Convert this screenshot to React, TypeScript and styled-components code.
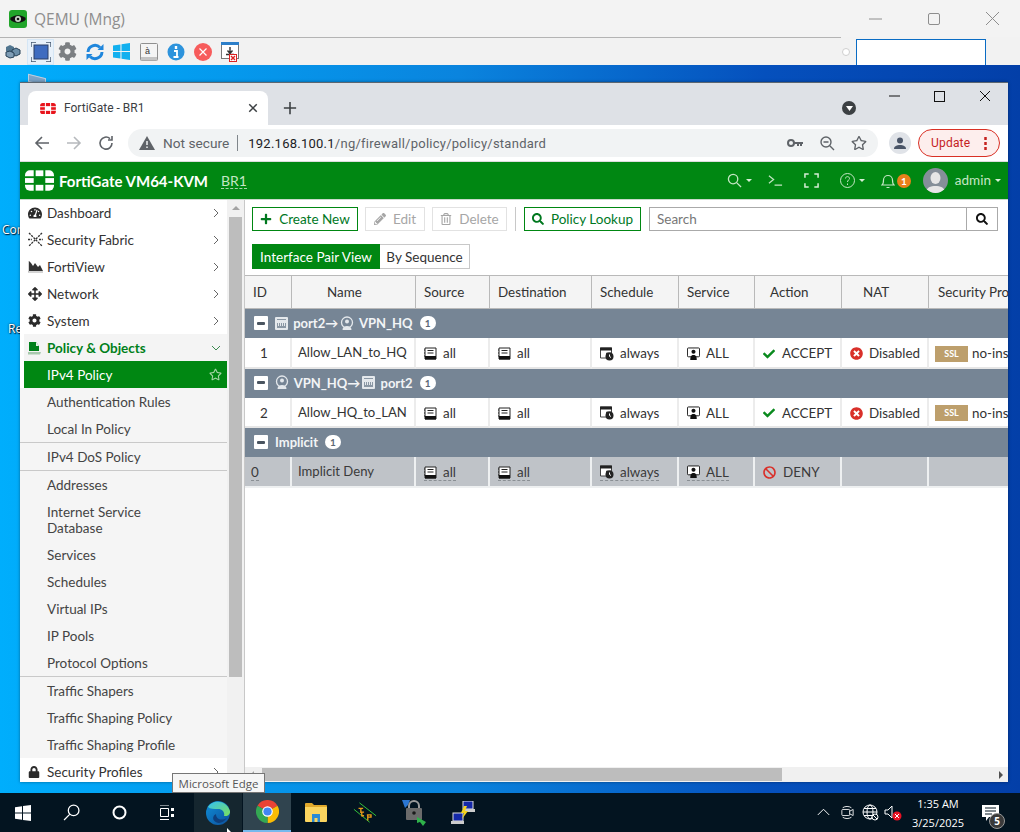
import React from "react"
import styled, {createGlobalStyle} from "styled-components"
import {
  FaArrowsAlt,
  FaBan,
  FaCheck,
  FaCog,
  FaLock,
  FaPencilAlt,
  FaPlus,
  FaRegStar,
  FaRegTrashAlt,
  FaSearch,
  FaTachometerAlt,
  FaTimesCircle
} from "react-icons/fa"

const GlobalStyle = createGlobalStyle`
  html, body {
    margin: 0;
    padding: 0;
    width: 1020px;
    height: 832px;
    overflow: hidden;
    font-family: "Lato", "Liberation Sans", sans-serif;
  }
  * {
    box-sizing: border-box;
  }
`

const Screen = styled.div`
  width: 1020px;
  height: 832px;
  display: flex;
  flex-direction: column;
`

/* ---- QEMU console window ---- */

const QemuTitle = styled.div`
  height: 37px;
  flex: none;
  background: #f3f3f3;
  display: flex;
  align-items: center;
  padding-left: 9px;
  gap: 7px;
  color: #8e8e8e;
  font: 15.5px "Open Sans", sans-serif;
`

const QemuControls = styled.div`
  margin-left: auto;
  display: flex;
  align-items: center;
  margin-right: 21px;
  gap: 46px;
`

const QemuBar = styled.div`
  height: 28px;
  flex: none;
  background: #f2f2f2;
  border-top: 1px solid #f2f2f2;
  display: flex;
  align-items: center;
  position: relative;
`

const QemuRule = styled.div`
  position: absolute;
  left: 0;
  top: -1px;
  width: 841px;
  height: 1px;
  background: #b4b4b4;
`

const QemuTool = styled.div<{$hover?: boolean}>`
  width: 27px;
  height: 26px;
  display: flex;
  align-items: center;
  justify-content: center;
  border: 1px solid ${(p) => (p.$hover ? "#d5e6f5" : "transparent")};
  background: ${(p) => (p.$hover ? "#e8f1fa" : "transparent")};
`

const QemuDot = styled.div`
  margin-left: auto;
  width: 8px;
  height: 8px;
  border-radius: 50%;
  background: #fff;
  border: 1px solid #cfcfcf;
`

const QemuInput = styled.div`
  width: 130px;
  height: 26px;
  margin: 1px 34px 0 6px;
  background: #fff;
  border: 1px solid #0a6cc4;
  border-bottom: 0;
`

const Desktop = styled.div`
  flex: 1;
  position: relative;
  overflow: hidden;
  background: linear-gradient(90deg, #00aefc 0%, #0a84de 45%, #0550bd 75%, #033fa8 100%);
`

const DesktopLabel = styled.span<{$top: number; $left: number}>`
  position: absolute;
  top: ${(p) => p.$top}px;
  left: ${(p) => p.$left}px;
  color: #fff;
  font: 12px "Open Sans", sans-serif;
  text-shadow: 0 0 2px #001a33, 1px 1px 1px #001a33;
`

const DesktopIcon = styled.div`
  position: absolute;
  left: 28px;
  top: 11px;
  width: 18px;
  height: 8px;
  background: #7da3c7;
  border: 1px solid #bcd0e2;
  transform: skewY(14deg);
`

/* ---- browser window ---- */

const BrowserWindow = styled.div`
  position: absolute;
  left: 20px;
  top: 17px;
  width: 988px;
  height: 700px;
  border-top: 1px solid #5c6670;
  display: flex;
  flex-direction: column;
  background: #fff;
  box-shadow: 0 0 3px rgba(0, 0, 0, 0.4);
`

const TabStrip = styled.div`
  height: 42px;
  flex: none;
  background: #dee1e6;
  display: flex;
  align-items: flex-end;
  padding-left: 8px;
  position: relative;
`

const Tab = styled.div`
  width: 240px;
  height: 34px;
  background: #fff;
  border-radius: 8px 8px 0 0;
  display: flex;
  align-items: center;
  padding: 0 9px 0 12px;
  gap: 8px;
  font: 12px "Roboto", sans-serif;
  color: #3c4043;
`

const TabClose = styled.span`
  margin-left: auto;
  display: flex;
`

const NewTab = styled.div`
  margin: 0 0 10px 15px;
  display: flex;
`

const ProfileArrow = styled.div`
  position: absolute;
  left: 822px;
  top: 18px;
  width: 14px;
  height: 14px;
  border-radius: 50%;
  background: #3c4043;
  display: flex;
  align-items: center;
  justify-content: center;
`

const WindowControls = styled.div`
  position: absolute;
  right: 17px;
  top: 7px;
  display: flex;
  align-items: center;
  gap: 34px;
`

const NavBar = styled.div`
  height: 37px;
  flex: none;
  display: flex;
  align-items: center;
  padding: 0 8px 0 6px;
  border-bottom: 1px solid #dcdcdc;
`

const NavButton = styled.div`
  width: 32px;
  flex: none;
  display: flex;
  justify-content: center;
`

const Omnibox = styled.div`
  margin-left: 6px;
  width: 750px;
  flex: none;
  height: 28px;
  border-radius: 14px;
  background: #f1f3f4;
  display: flex;
  align-items: center;
  padding-left: 11px;
  font: 13px "Roboto", sans-serif;
  color: #5f6368;
`

const SecureLabel = styled.span`
  margin-left: 8px;
  font-size: 13.7px;
`

const UrlSep = styled.span`
  width: 1px;
  height: 16px;
  background: #80868b;
  margin: 0 10px 0 8px;
`

const UrlHost = styled.span`
  color: #202124;
  letter-spacing: 0.25px;
`

const UrlPath = styled.span`
  letter-spacing: 0.25px;
`

const OmniIcons = styled.div`
  margin-left: auto;
  display: flex;
  align-items: center;
  gap: 16px;
  margin-right: 11px;
`

const ProfileButton = styled.div`
  margin-left: 11px;
  width: 22px;
  height: 22px;
  flex: none;
  border-radius: 50%;
  background: #e0e3e8;
  display: flex;
  align-items: center;
  justify-content: center;
`

const UpdatePill = styled.div`
  margin-left: 7px;
  width: 82px;
  flex: none;
  height: 28px;
  border-radius: 14px;
  border: 1px solid #d93025;
  background: #fdeeed;
  color: #c5221f;
  display: flex;
  align-items: center;
  padding-left: 12px;
  font: 12px "Roboto", sans-serif;
  letter-spacing: 0.2px;
`

const PillDots = styled.span`
  margin-left: auto;
  margin-right: 12px;
  display: flex;
`

/* ---- FortiGate header ---- */

const GreenHeader = styled.div`
  height: 38px;
  flex: none;
  background: #008712;
  border-bottom: 1px solid #c9d9cb;
  display: flex;
  align-items: center;
  padding-left: 5px;
  color: #fff;
`

const Brand = styled.span`
  margin-left: 5px;
  font-size: 15px;
  font-weight: 700;
`

const Hostname = styled.span`
  margin-left: 13px;
  font-size: 14px;
  color: #c4e6c4;
  border-bottom: 1px dashed #a8d4a8;
  line-height: 15px;
`

const HeaderTools = styled.div`
  margin-left: auto;
  display: flex;
  align-items: center;
  margin-right: 7px;
  color: #c4e6c4;
`

const HeaderTool = styled.span<{$w: number}>`
  width: ${(p) => p.$w}px;
  display: flex;
  align-items: center;
  position: relative;
`

const Caret = styled.span`
  width: 0;
  height: 0;
  margin-left: 4px;
  border-left: 3.5px solid transparent;
  border-right: 3.5px solid transparent;
  border-top: 3.5px solid #d6eed6;
`

const BellBadge = styled.span`
  position: absolute;
  left: 16px;
  top: 1px;
  width: 14px;
  height: 14px;
  border-radius: 50%;
  background: #e8811a;
  color: #fff;
  font-size: 10px;
  font-weight: 700;
  line-height: 14px;
  text-align: center;
`

const AdminAvatar = styled.span`
  width: 25px;
  height: 25px;
  border-radius: 50%;
  background: #858f99;
  overflow: hidden;
  display: flex;
`

const AdminName = styled.span`
  margin-left: 7px;
  margin-bottom: 1px;
  font-size: 13.5px;
`

/* ---- layout under the header ---- */

const Main = styled.div`
  flex: 1;
  min-height: 0;
  display: flex;
`

const Sidebar = styled.div`
  width: 225px;
  flex: none;
  display: flex;
  border-right: 1px solid #c8c8c8;
  overflow: hidden;
`

const MenuList = styled.nav`
  width: 207px;
  flex: none;
  margin-top: -1px;
  font-size: 13.5px;
  color: #333;
`

const MenuItem = styled.div<{$open?: boolean}>`
  height: 27px;
  display: flex;
  align-items: center;
  background: #fff;
  padding-left: ${(p) => (p.$open ? 4 : 8)}px;
  padding-right: 6px;
  color: ${(p) => (p.$open ? "#00801a" : "#333")};
  font-weight: ${(p) => (p.$open ? 700 : 400)};
  ${(p) => p.$open && "border-left: 4px solid #fff; background-clip: padding-box; background-color: #f4f4f4;"}
`

const MenuIcon = styled.span`
  width: 19px;
  flex: none;
  display: flex;
  align-items: center;
`

const MenuChevron = styled.span`
  margin-left: auto;
  display: flex;
`

const SubItem = styled.div<{$rule?: boolean; $tall?: boolean}>`
  min-height: ${(p) => (p.$tall ? 43 : 27)}px;
  box-sizing: content-box;
  background: #f5f5f5;
  padding-left: 27px;
  padding-right: 50px;
  display: flex;
  align-items: center;
  color: #444;
  line-height: 16px;
  border-bottom: ${(p) => (p.$rule ? "1px solid #c9c9c9" : "0")};
`

const SubItemActive = styled.div`
  height: 27px;
  margin-left: 4px;
  background: #008712;
  color: #fff;
  padding: 0 5px 0 23px;
  display: flex;
  align-items: center;
  justify-content: space-between;
`

const ScrollTrack = styled.div`
  width: 17px;
  flex: none;
  background: #f1f1f1;
  display: flex;
  flex-direction: column;
  align-items: center;
`

const ScrollArrow = styled.span<{$down?: boolean}>`
  margin: ${(p) => (p.$down ? "auto 0 5px" : "6px 0")};
  width: 0;
  height: 0;
  border-left: 4px solid transparent;
  border-right: 4px solid transparent;
  ${(p) => (p.$down ? "border-top: 4px solid #505050;" : "border-bottom: 4px solid #a3a3a3;")}
`

const ScrollThumb = styled.div`
  margin-top: 1px;
  width: 13px;
  height: 460px;
  background: #bdbdbd;
`

const Content = styled.div`
  flex: 1;
  min-width: 0;
  display: flex;
  flex-direction: column;
  position: relative;
`

const Toolbar = styled.div`
  display: flex;
  align-items: center;
  padding: 7px 10px 0 7px;
`

const ToolButton = styled.div<{$disabled?: boolean; $w: number; $gap?: number}>`
  width: ${(p) => p.$w}px;
  height: 24px;
  margin-right: ${(p) => p.$gap ?? 7}px;
  display: flex;
  align-items: center;
  justify-content: center;
  gap: 7px;
  font-size: 13.5px;
  border: ${(p) => (p.$disabled ? "1px solid #e2e2e2" : "1px solid #008712")};
  color: ${(p) => (p.$disabled ? "#a6a6a6" : "#00781f")};
`

const ToolSep = styled.span`
  width: 1px;
  height: 24px;
  background: #c8c8c8;
  margin: 0 8px 0 1px;
`

const SearchBox = styled.div`
  flex: 1;
  margin-left: 1px;
  height: 24px;
  border: 1px solid #aaa;
  display: flex;
  align-items: center;
  padding-left: 7px;
  color: #777;
  font-size: 13.5px;
`

const SearchGo = styled.span`
  margin-left: auto;
  width: 31px;
  height: 22px;
  border-left: 1px solid #aaa;
  color: #111;
  display: flex;
  align-items: center;
  justify-content: center;
`

const ViewTabs = styled.div`
  display: flex;
  padding: 13px 0 6px 7px;
`

const ViewTab = styled.div<{$active?: boolean}>`
  height: 25px;
  width: ${(p) => (p.$active ? 128 : 90)}px;
  display: flex;
  align-items: center;
  justify-content: center;
  font-size: 13.5px;
  background: ${(p) => (p.$active ? "#008712" : "#fff")};
  color: ${(p) => (p.$active ? "#fff" : "#333")};
  border: 1px solid ${(p) => (p.$active ? "#008712" : "#c8c8c8")};
  border-left: ${(p) => (p.$active ? "1px solid #008712" : "0")};
`

const TableWrap = styled.div`
  flex: 1;
  min-height: 0;
  overflow: hidden;
`

const PolicyTable = styled.table`
  table-layout: fixed;
  width: 834px;
  border-collapse: separate;
  border-spacing: 0;
  font-size: 13.4px;
  color: #333;
`

const HeadCell = styled.th<{$pad: number}>`
  height: 34px;
  padding: 0 0 0 ${(p) => p.$pad}px;
  font-weight: 400;
  background: #f4f4f4;
  border-top: 1px solid #b9b9b9;
  border-bottom: 1px solid #b9b9b9;
  border-right: 1px solid #b9b9b9;
  text-align: left;
  white-space: nowrap;
  overflow: hidden;
`

const GroupCell = styled.td`
  height: 29px;
  padding: 0 0 1px 9px;
  background: #768595;
  color: #f2f4f6;
  font-size: 13px;
  font-weight: 700;
`

const GroupInner = styled.div`
  display: flex;
  align-items: center;
  gap: 7px;
`

const GroupName = styled.span`
  display: flex;
  align-items: center;
  gap: 2px;
`

const Collapse = styled.span`
  width: 14px;
  height: 14px;
  border-radius: 1px;
  background: #fff;
  display: flex;
  align-items: center;
  justify-content: center;
  &::after {
    content: "";
    width: 8px;
    height: 3px;
    border-radius: 1px;
    background: #4a5560;
  }
`

const CountBadge = styled.span`
  min-width: 16px;
  height: 14px;
  border-radius: 7px;
  background: #fff;
  color: #5b6875;
  font-size: 10px;
  font-weight: 700;
  line-height: 14px;
  text-align: center;
`

const Cell = styled.td<{$implicit?: boolean; $pad?: number}>`
  height: 30.5px;
  padding: 1px 0 0 ${(p) => p.$pad ?? 8}px;
  text-align: left;
  white-space: nowrap;
  overflow: hidden;
  background: ${(p) => (p.$implicit ? "#bfc3c8" : "#fff")};
  color: ${(p) => (p.$implicit ? "#3a3a3a" : "#333")};
  border-right: 2px solid ${(p) => (p.$implicit ? "#eef0f1" : "#ececec")};
  border-bottom: 2px solid ${(p) => (p.$implicit ? "#eef0f1" : "#e6e6e6")};
`

const NameCell = styled(Cell)`
  padding-top: 0;
  font-size: 13.1px;
`

const CellInner = styled.span<{$dashed?: boolean; $gap?: number}>`
  display: inline-flex;
  align-items: center;
  vertical-align: middle;
  gap: ${(p) => p.$gap ?? 6}px;
  line-height: 15px;
  ${(p) => p.$dashed && "border-bottom: 1px dashed #8a8f94;"}
`

const SslTag = styled.span`
  width: 33px;
  height: 16px;
  background: #bd9f6c;
  color: #fff;
  font-size: 9px;
  font-weight: 700;
  line-height: 16px;
  text-align: center;
`

const HScroll = styled.div`
  height: 15px;
  flex: none;
  background: #f0f0f0;
  display: flex;
  align-items: center;
  padding: 0 5px;
`

const HArrow = styled.span<{$right?: boolean}>`
  width: 0;
  height: 0;
  border-top: 4px solid transparent;
  border-bottom: 4px solid transparent;
  ${(p) => (p.$right ? "border-left: 4px solid #505050; margin-left: auto;" : "border-right: 4px solid #a3a3a3;")}
`

const HThumb = styled.div`
  margin-left: 8px;
  width: 520px;
  height: 13px;
  background: #bdbdbd;
`

const Tooltip = styled.div`
  position: absolute;
  left: 172px;
  top: 708px;
  height: 20px;
  width: 93px;
  background: #f6f6f6;
  border: 1px solid #767676;
  color: #575757;
  font: 11.5px "Open Sans", sans-serif;
  display: flex;
  align-items: center;
  justify-content: center;
`

/* ---- windows taskbar ---- */

const Taskbar = styled.div`
  height: 39px;
  flex: none;
  background: #031420;
  display: flex;
  align-items: stretch;
  color: #fff;
  position: relative;
`

const SystemSlots = styled.div`
  display: flex;
  margin: 0 3px 0 -1px;
`

const TaskSlot = styled.div<{$state?: "hover" | "open"; $app?: boolean}>`
  width: 48px;
  margin-right: ${(p) => (p.$app ? 1 : 0)}px;
  display: flex;
  align-items: center;
  justify-content: center;
  background: ${(p) =>
    p.$state === "open" ? "#30444f" : p.$state === "hover" ? "#15262f" : "transparent"};
  ${(p) => p.$state === "open" && "border-bottom: 2px solid #76b9ed;"}
`

const Tray = styled.div`
  margin-left: auto;
  display: flex;
  align-items: center;
`

const TrayIcon = styled.span<{$w: number}>`
  width: ${(p) => p.$w}px;
  display: flex;
  justify-content: center;
`

const Clock = styled.div`
  width: 52px;
  margin-left: 8px;
  text-align: center;
  white-space: nowrap;
  font: 11px/19px "Open Sans", sans-serif;
`

const Notify = styled.div`
  width: 56px;
  padding-right: 3px;
  display: flex;
  justify-content: center;
  position: relative;
`

const NotifyCount = styled.span`
  position: absolute;
  left: 25px;
  top: 8px;
  width: 16px;
  height: 16px;
  border-radius: 50%;
  background: #3a3a3a;
  border: 1px solid #999;
  font: 700 10px/14px "Open Sans", sans-serif;
  text-align: center;
`

const Pointer = styled.svg`
  position: absolute;
  left: 227px;
  top: 35px;
`

/* ---- drawn icons ---- */

const FortiLogo = ({color, w, h}: {color: string; w: number; h: number}) => (
  <svg width={w} height={h} viewBox="0 0 30 21" fill={color}>
    <path d="M5 0h4v6H0V5a5 5 0 0 1 5-5z" />
    <rect x="11" width="8" height="6" />
    <path d="M21 0h4a5 5 0 0 1 5 5v1h-9z" />
    <rect y="8" width="9" height="5" />
    <rect x="21" y="8" width="9" height="5" />
    <path d="M0 15h9v6H5a5 5 0 0 1-5-5z" />
    <rect x="11" y="15" width="8" height="6" />
    <path d="M21 15h9v1a5 5 0 0 1-5 5h-4z" />
  </svg>
)

const Chevron = ({open}: {open?: boolean}) => (
  <svg width="10" height="10" viewBox="0 0 10 10" fill="none" stroke={open ? "#3c8a50" : "#666"} strokeWidth="1">
    {open ? <path d="M1 3l4 4 4-4" /> : <path d="M3 1l4 4-4 4" />}
  </svg>
)

const FabricIcon = () => (
  <svg width="15" height="15" viewBox="0 0 15 15" stroke="#333" strokeWidth="1.3" fill="none" strokeDasharray="2.2 1">
    <path d="M1 1l13 13M14 1L1 14M0 7.5h4M11 7.5h4" />
  </svg>
)

const ViewIcon = () => (
  <svg width="15" height="13" viewBox="0 0 15 13">
    <path d="M1 1v10h14l-3-6-2 2-3-4-2 3-2-3z" fill="#333" />
    <path d="M0 1v11h15" stroke="#aaa" strokeWidth="1" fill="none" />
  </svg>
)

const PolicyIcon = () => (
  <svg width="14" height="14" viewBox="0 0 14 14">
    <path d="M1 1h7l3 4v5H1z" fill="#00801a" />
    <path d="M0 11h13l-1 2.5H0z" fill="#a8c9ae" />
    <path d="M8 1l3 4H8z" fill="#e8f3e8" />
  </svg>
)

const PortIcon = ({color = "#e4e8ec"}: {color?: string}) => (
  <svg width="13" height="13" viewBox="0 0 13 13">
    <rect width="13" height="13" rx="1" fill={color} />
    <path d="M2 6h9v5H2z" fill="#8a97a4" />
    <path d="M3.5 6v3M5.5 6v3M7.5 6v3M9.5 6v3" stroke={color} strokeWidth="1" />
    <path d="M2 2.5h9" stroke="#8a97a4" />
  </svg>
)

const TunnelIcon = () => (
  <svg width="14" height="15" viewBox="0 0 14 15" fill="none">
    <circle cx="7" cy="6.5" r="5.5" stroke="#e4e8ec" strokeWidth="1.3" />
    <circle cx="7" cy="5.5" r="2" fill="#e4e8ec" />
    <path d="M2.5 14c0-3 2-4 4.500-4s4.500 1 4.500 4z" fill="#e4e8ec" />
  </svg>
)

const AddressIcon = () => (
  <svg width="13" height="13" viewBox="0 0 13 13">
    <path d="M1 1h11v11H1z" fill="#fff" stroke="#222" />
    <path d="M1 9h11v3.500H1z" fill="#111" />
    <path d="M3.500 3.500h6M3.500 6h6" stroke="#222" />
    <path d="M0 3h1M0 6h1M0 9h1" stroke="#222" />
  </svg>
)

const ScheduleIcon = () => (
  <svg width="14" height="14" viewBox="0 0 14 14">
    <path d="M.5 1h11v5h-5v5H.5z" fill="#fff" stroke="#444" />
    <path d="M0 .5h12v3H0z" fill="#222" />
    <circle cx="9.500" cy="9.500" r="4" fill="#222" />
    <path d="M9.500 7.500v2l1.500 1" stroke="#fff" fill="none" />
  </svg>
)

const ServiceIcon = () => (
  <svg width="13" height="14" viewBox="0 0 14 14">
    <rect x=".5" y=".5" width="13" height="9.500" rx="1" fill="#fff" stroke="#111" />
    <circle cx="7" cy="4.500" r="2.200" fill="#111" />
    <path d="M3.500 13.500c0-4 1-5.500 3.500-5.500s3.500 1.500 3.500 5.500z" fill="#111" />
  </svg>
)

const GlyphStroke = ({size, d, color = "#5f6368", w = 1.6}: {size: number; d: string; color?: string; w?: number}) => (
  <svg width={size} height={size} viewBox="0 0 16 16" fill="none" stroke={color} strokeWidth={w}>
    <path d={d} />
  </svg>
)

const WinLogo = ({color, size}: {color: string; size: number}) => (
  <svg width={size} height={size} viewBox="0 0 16 16" fill={color}>
    <path d="M0 2.300l7-1V7.500H0zM8 1.100L16 0v7.500H8zM0 8.500h7v6.200l-7-1zM8 8.500h8V16l-8-1.100z" />
  </svg>
)

const QemuToolIcon = ({name}: {name: string}) => {
  switch (name) {
    case "cubes":
      return (
        <svg width="17" height="15" viewBox="0 0 17 15">
          <path d="M5 1l4 2v4L5 9 1 7V3z" fill="#52768f" />
          <path d="M11 4l4 2v4l-4 2-4-2V6z" fill="#6b8ea8" stroke="#243f55" />
          <path d="M5 7l4 2v4l-4 1-4-2V8z" fill="#7f9db5" stroke="#243f55" />
        </svg>
      )
    case "fit":
      return (
        <svg width="20" height="20" viewBox="0 0 20 20">
          <rect x="3" y="3" width="14" height="14" fill="#3f6cc0" stroke="#2a3f66" />
          <path d="M0 5V0h5M15 0h5v5M20 15v5h-5M5 20H0v-5" stroke="#44576e" strokeWidth="1.4" fill="none" />
        </svg>
      )
    case "gear":
      return <FaCog size={19} color="#7c7f82" />
    case "sync":
      return (
        <svg width="18" height="18" viewBox="0 0 18 18" fill="none" stroke="#1f86dc" strokeWidth="3">
          <path d="M2 9a7 7 0 0 1 12-4.500" />
          <path d="M16 9a7 7 0 0 1-12 4.500" />
          <path d="M17.500 1v6h-6z" fill="#1f86dc" strokeWidth="0" />
          <path d="M.5 17v-6h6z" fill="#1f86dc" strokeWidth="0" />
        </svg>
      )
    case "win":
      return <WinLogo color="#12b0ef" size={17} />
    case "key":
      return (
        <svg width="18" height="18" viewBox="0 0 18 18">
          <rect x=".5" y=".5" width="17" height="17" rx="1" fill="#f4f4f4" stroke="#8f8f8f" />
          <rect x="1" y="14" width="16" height="3.500" fill="#c4c4c4" />
          <text x="5" y="11" fontSize="9" fontFamily="Liberation Sans" fill="#333">à</text>
        </svg>
      )
    case "info":
      return (
        <svg width="18" height="18" viewBox="0 0 18 18">
          <circle cx="9" cy="9" r="8.500" fill="#2d93dc" />
          <path d="M9 3v3" stroke="#fff" strokeWidth="2.400" />
          <path d="M7 8h3v6h1.500M6.500 14h5" stroke="#fff" strokeWidth="1.800" fill="none" />
        </svg>
      )
    case "stop":
      return (
        <svg width="18" height="18" viewBox="0 0 18 18">
          <circle cx="9" cy="9" r="9" fill="#f75c5c" />
          <path d="M5.500 5.500l7 7M12.500 5.500l-7 7" stroke="#fff" strokeWidth="1.200" />
        </svg>
      )
    default:
      return (
        <svg width="18" height="20" viewBox="0 0 18 20">
          <rect x=".5" y=".5" width="17" height="16" fill="#fff" stroke="#777" />
          <rect width="18" height="3" fill="#2d7fc9" />
          <path d="M9 5v6M6.500 8.500L9 11.500l2.500-3M5 12.500h8" stroke="#333" strokeWidth="1.400" fill="none" />
          <rect x="8.500" y="12.500" width="7" height="7" fill="#fff" stroke="#d22" />
          <path d="M10 14l4 4M14 14l-4 4" stroke="#d22" strokeWidth="1.400" />
        </svg>
      )
  }
}

const EdgeIcon = () => (
  <svg width="24" height="24" viewBox="0 0 24 24">
    <defs>
      <linearGradient id="edgeA" x1="0" y1="0" x2="1" y2="1">
        <stop offset="0" stopColor="#0f8fd8" />
        <stop offset="1" stopColor="#0c4f9c" />
      </linearGradient>
      <linearGradient id="edgeB" x1="0" y1="0" x2="1" y2="1">
        <stop offset="0" stopColor="#35c1f1" />
        <stop offset="1" stopColor="#7be05c" />
      </linearGradient>
    </defs>
    <circle cx="12" cy="12" r="12" fill="url(#edgeA)" />
    <path d="M2 6C6-1 20-2 24 10c.5 4-3 5.500-6 5 1-3-1-7-6-7-4 0-8 0-10-2z" fill="url(#edgeB)" />
    <path d="M10 13c0 4 3 6 7 5.500 2-.3 3-1 4-2-3 6-10 7-13 3-1.500-2-1-5 2-6.500z" fill="#0e3f7d" />
  </svg>
)

const ChromeIcon = () => (
  <svg width="23" height="23" viewBox="0 0 24 24">
    <path d="M12 12L1.600 6A12 12 0 0 1 22.400 6z" fill="#ea4335" />
    <path d="M12 12L22.400 6A12 12 0 0 1 12 24z" fill="#fbbc04" />
    <path d="M12 12L12 24A12 12 0 0 1 1.600 6z" fill="#34a853" />
    <circle cx="12" cy="12" r="5.500" fill="#fff" />
    <circle cx="12" cy="12" r="4.300" fill="#4285f4" />
  </svg>
)

const FolderIcon = () => (
  <svg width="22" height="19" viewBox="0 0 22 19">
    <path d="M0 1a1 1 0 0 1 1-1h6l2 2h12a1 1 0 0 1 1 1v2H0z" fill="#e0a92c" />
    <path d="M0 4h22v14a1 1 0 0 1-1 1H1a1 1 0 0 1-1-1z" fill="#fbd55f" />
    <path d="M7 11h8v8h-2.500v-4h-3v4H7z" fill="#2a8ad4" />
  </svg>
)

const TcpIcon = () => (
  <svg width="24" height="24" viewBox="0 0 26 24" fill="none">
    <path d="M1 8L18 22M7 1l18 14" stroke="#38d13c" strokeWidth="1" />
    <path d="M6 7h5M8.500 7v5M12 11h-2.500v4H12M15 14h4.500v2.500H16M16 14v6" stroke="#e99a18" strokeWidth="1.500" />
  </svg>
)

const LockNetIcon = () => (
  <svg width="24" height="26" viewBox="0 0 24 26">
    <path d="M0 0h8l-2 5-3 3z" fill="#2a76d2" />
    <path d="M7 8V6a5 5 0 0 1 10 0v2" stroke="#9a9a9a" strokeWidth="2" fill="none" />
    <rect x="4" y="8" width="16" height="12" rx="1" fill="#6b6b6b" />
    <circle cx="12" cy="13" r="1.800" fill="#1a1a1a" />
    <path d="M15 17l9 5-3 4-3-4-3 1z" fill="#2fb24a" />
  </svg>
)

const NetLinkIcon = () => (
  <svg width="24" height="24" viewBox="0 0 24 24">
    <rect x="12" y="0" width="10" height="8" fill="#1428a8" stroke="#ddd" />
    <rect x="13" y="8" width="11" height="3" fill="#ccc" />
    <rect x="2" y="12" width="10" height="8" fill="#1428a8" stroke="#ddd" />
    <rect x="0" y="20" width="13" height="3" fill="#ccc" />
    <path d="M13 5l-3 7h3l-2 6 6-8h-3l2-5z" fill="#f4d21f" />
  </svg>
)

/* ---- data ---- */

const topMenu = [
  {label: "Dashboard", icon: <FaTachometerAlt size={14} color="#2b2b2b" />},
  {label: "Security Fabric", icon: <FabricIcon />},
  {label: "FortiView", icon: <ViewIcon />},
  {label: "Network", icon: <FaArrowsAlt size={14} color="#2b2b2b" />},
  {label: "System", icon: <FaCog size={13} color="#2b2b2b" />}
]

const subMenu = [
  {label: "Authentication Rules"},
  {label: "Local In Policy", rule: true},
  {label: "IPv4 DoS Policy", rule: true},
  {label: "Addresses"},
  {label: "Internet Service Database", tall: true},
  {label: "Services"},
  {label: "Schedules"},
  {label: "Virtual IPs"},
  {label: "IP Pools"},
  {label: "Protocol Options", rule: true},
  {label: "Traffic Shapers"},
  {label: "Traffic Shaping Policy"},
  {label: "Traffic Shaping Profile"}
]

const columns = [
  {label: "ID", width: 47, pad: 8},
  {label: "Name", width: 124, pad: 35},
  {label: "Source", width: 74, pad: 8},
  {label: "Destination", width: 102, pad: 8},
  {label: "Schedule", width: 87, pad: 8},
  {label: "Service", width: 76, pad: 8},
  {label: "Action", width: 87, pad: 15},
  {label: "NAT", width: 87, pad: 21},
  {label: "Security Profiles", width: 150, pad: 9}
]

type Policy = {id: string; name: string; accept: boolean; implicit?: boolean}

const groups: {key: string; title: React.ReactNode; policy: Policy}[] = [
  {
    key: "out",
    title: (
      <GroupName>
        <PortIcon />
        &nbsp;port2→
        <TunnelIcon />
        &nbsp;VPN_HQ
      </GroupName>
    ),
    policy: {id: "1", name: "Allow_LAN_to_HQ", accept: true}
  },
  {
    key: "in",
    title: (
      <GroupName>
        <TunnelIcon />
        &nbsp;VPN_HQ→
        <PortIcon />
        &nbsp;port2
      </GroupName>
    ),
    policy: {id: "2", name: "Allow_HQ_to_LAN", accept: true}
  },
  {
    key: "implicit",
    title: <GroupName>Implicit</GroupName>,
    policy: {id: "0", name: "Implicit Deny", accept: false, implicit: true}
  }
]

const PolicyRow = ({policy}: {policy: Policy}) => {
  const dim = policy.implicit
  return (
    <tr>
      <Cell $pad={dim ? 6 : 15} $implicit={dim}>
        <CellInner $dashed={dim}>{policy.id}</CellInner>
      </Cell>
      <NameCell $pad={6} $implicit={dim}>{policy.name}</NameCell>
      <Cell $implicit={dim}>
        <CellInner $dashed={dim}>
          <AddressIcon />
          all
        </CellInner>
      </Cell>
      <Cell $implicit={dim}>
        <CellInner $dashed={dim}>
          <AddressIcon />
          all
        </CellInner>
      </Cell>
      <Cell $implicit={dim}>
        <CellInner $dashed={dim}>
          <ScheduleIcon />
          always
        </CellInner>
      </Cell>
      <Cell $implicit={dim}>
        <CellInner $dashed={dim}>
          <ServiceIcon />
          ALL
        </CellInner>
      </Cell>
      <Cell $implicit={dim}>
        <CellInner $gap={7}>
          {policy.accept ? <FaCheck size={12} color="#0a8a1e" /> : <FaBan size={13} color="#d9302a" />}
          {policy.accept ? "ACCEPT" : "DENY"}
        </CellInner>
      </Cell>
      <Cell $implicit={dim}>
        {policy.accept && (
          <CellInner>
            <FaTimesCircle size={13} color="#d9302a" />
            Disabled
          </CellInner>
        )}
      </Cell>
      <Cell $pad={6} $implicit={dim}>
        {policy.accept && (
          <CellInner $gap={4}>
            <SslTag>SSL</SslTag>
            no-inspection
          </CellInner>
        )}
      </Cell>
    </tr>
  )
}

export default function App() {
  return (
    <Screen>
      <GlobalStyle />
      <QemuTitle>
        <svg width="18" height="18" viewBox="0 0 18 18">
          <rect width="18" height="18" rx="3" fill="#21a52a" />
          <path d="M1 9c3-5 13-5 16 0-3 5-13 5-16 0z" fill="#111" />
          <circle cx="9" cy="9" r="3" fill="#c8d8c8" />
          <circle cx="9" cy="9" r="1.300" fill="#111" />
        </svg>
        QEMU (Mng)
        <QemuControls>
          <svg width="13" height="2"><path d="M0 1h13" stroke="#8e8e8e" /></svg>
          <svg width="12" height="12"><rect x=".5" y=".5" width="11" height="11" rx="1.500" fill="none" stroke="#8e8e8e" /></svg>
          <svg width="13" height="13"><path d="M0 0l13 13M13 0L0 13" stroke="#8e8e8e" /></svg>
        </QemuControls>
      </QemuTitle>
      <QemuBar>
        <QemuRule />
        {["cubes", "fit", "gear", "sync", "win", "key", "info", "stop", "drop"].map((name) => (
          <QemuTool key={name} $hover={name === "fit"}>
            <QemuToolIcon name={name} />
          </QemuTool>
        ))}
        <QemuDot />
        <QemuInput />
      </QemuBar>

      <Desktop>
        <DesktopIcon />
        <DesktopLabel $top={156} $left={2}>Cor</DesktopLabel>
        <DesktopLabel $top={255} $left={8}>Re</DesktopLabel>
        <BrowserWindow>
          <TabStrip>
            <Tab>
              <FortiLogo color="#e8141c" w={16} h={11} />
              FortiGate - BR1
              <TabClose>
                <GlyphStroke size={12} d="M3 3l10 10M13 3L3 13" color="#3c4043" w={2} />
              </TabClose>
            </Tab>
            <NewTab>
              <GlyphStroke size={14} d="M8 1v14M1 8h14" color="#3c4043" w={1.8} />
            </NewTab>
            <ProfileArrow>
              <svg width="7" height="5"><path d="M0 0h7L3.500 5z" fill="#fff" /></svg>
            </ProfileArrow>
            <WindowControls>
              <svg width="11" height="2"><path d="M0 1h11" stroke="#111" /></svg>
              <svg width="11" height="11"><rect x=".5" y=".5" width="10" height="10" fill="none" stroke="#111" /></svg>
              <svg width="12" height="12"><path d="M1 1l10 10M11 1L1 11" stroke="#111" /></svg>
            </WindowControls>
          </TabStrip>
          <NavBar>
            <NavButton>
              <GlyphStroke size={16} d="M15 8H2M8 2L2 8l6 6" />
            </NavButton>
            <NavButton>
              <GlyphStroke size={16} d="M1 8h13M8 2l6 6-6 6" color="#b6b9bd" />
            </NavButton>
            <NavButton>
              <GlyphStroke size={16} d="M14 8a6 6 0 1 1-2-4.400M14 1v4h-4" />
            </NavButton>
            <Omnibox>
              <svg width="16" height="14" viewBox="0 0 16 14">
                <path d="M8 0l8 14H0z" fill="#5f6368" />
                <path d="M8 5v4M8 10.500v1.500" stroke="#f1f3f4" strokeWidth="1.500" />
              </svg>
              <SecureLabel>Not secure</SecureLabel>
              <UrlSep />
              <UrlHost>192.168.100.1</UrlHost>
              <UrlPath>/ng/firewall/policy/policy/standard</UrlPath>
              <OmniIcons>
                <svg width="16" height="8" viewBox="0 0 16 8">
                  <circle cx="4" cy="4" r="3" fill="none" stroke="#5f6368" strokeWidth="2" />
                  <path d="M7 3h9v2h-1v2h-2V5h-1v2h-2V5H7z" fill="#5f6368" />
                </svg>
                <GlyphStroke size={16} d="M11 11l4 4M4.500 7h5M12 7A5 5 0 1 1 2 7a5 5 0 0 1 10 0z" w={1.4} />
                <FaRegStar size={16} color="#5f6368" />
              </OmniIcons>
            </Omnibox>
            <ProfileButton>
              <svg width="12" height="13" viewBox="0 0 12 13" fill="#4a5568">
                <circle cx="6" cy="3.500" r="3" />
                <path d="M0 12c0-3 3-4 6-4s6 1 6 4z" />
              </svg>
            </ProfileButton>
            <UpdatePill>
              Update
              <PillDots>
                <svg width="3" height="13"><path d="M1.500 0v3M1.500 5v3M1.500 10v3" stroke="#c5221f" strokeWidth="2.500" /></svg>
              </PillDots>
            </UpdatePill>
          </NavBar>

          <GreenHeader>
            <FortiLogo color="#fff" w={29} h={21} />
            <Brand>FortiGate VM64-KVM</Brand>
            <Hostname>BR1</Hostname>
            <HeaderTools>
              <HeaderTool $w={41}>
                <GlyphStroke size={15} d="M10.500 10.500L15 15M11.500 6.500a5 5 0 1 1-10 0 5 5 0 0 1 10 0z" color="#c4e6c4" w={1.4} />
                <Caret />
              </HeaderTool>
              <HeaderTool $w={36}>
                <GlyphStroke size={15} d="M1 3l5 4-5 4M7 13h8" color="#c4e6c4" w={1.3} />
              </HeaderTool>
              <HeaderTool $w={36}>
                <GlyphStroke size={15} d="M1 5V1h4M11 1h4v4M15 11v4h-4M5 15H1v-4" color="#d6eed6" w={1.6} />
              </HeaderTool>
              <HeaderTool $w={41}>
                <svg width="15" height="15" viewBox="0 0 15 15" fill="none" stroke="#c4e6c4">
                  <circle cx="7.500" cy="7.500" r="7" />
                  <path d="M5.500 5.500c0-2.500 4-2.500 4 0 0 1.500-2 1.500-2 3.500M7.500 10.500v1.500" />
                </svg>
                <Caret />
              </HeaderTool>
              <HeaderTool $w={42}>
                <svg width="14" height="16" viewBox="0 0 14 16" fill="none" stroke="#c4e6c4" strokeWidth="1.200">
                  <path d="M1 12c1.500-1 1.500-2.500 1.500-5a4.500 4.500 0 0 1 9 0c0 2.500 0 4 1.500 5zM5.500 14.500h3" />
                </svg>
                <BellBadge>1</BellBadge>
              </HeaderTool>
              <AdminAvatar>
                <svg width="25" height="25" viewBox="0 0 25 25" fill="#e6e6e6">
                  <ellipse cx="12.500" cy="10" rx="5" ry="6" />
                  <path d="M3 25c0-6 5-7 9.500-7S22 19 22 25z" />
                </svg>
              </AdminAvatar>
              <AdminName>admin</AdminName>
              <Caret />
            </HeaderTools>
          </GreenHeader>

          <Main>
            <Sidebar>
              <MenuList>
                {topMenu.map((m) => (
                  <MenuItem key={m.label}>
                    <MenuIcon>{m.icon}</MenuIcon>
                    {m.label}
                    <MenuChevron><Chevron /></MenuChevron>
                  </MenuItem>
                ))}
                <MenuItem $open>
                  <MenuIcon><PolicyIcon /></MenuIcon>
                  Policy &amp; Objects
                  <MenuChevron><Chevron open /></MenuChevron>
                </MenuItem>
                <SubItemActive>
                  IPv4 Policy
                  <FaRegStar size={13} color="#a5d6a5" />
                </SubItemActive>
                {subMenu.map((s) => (
                  <SubItem key={s.label} $rule={s.rule} $tall={s.tall}>
                    {s.label}
                  </SubItem>
                ))}
                <MenuItem>
                  <MenuIcon><FaLock size={12} color="#2b2b2b" /></MenuIcon>
                  Security Profiles
                  <MenuChevron><Chevron /></MenuChevron>
                </MenuItem>
              </MenuList>
              <ScrollTrack>
                <ScrollArrow />
                <ScrollThumb />
                <ScrollArrow $down />
              </ScrollTrack>
            </Sidebar>

            <Content>
              <Toolbar>
                <ToolButton $w={106}>
                  <FaPlus size={12} color="#00781f" />
                  Create New
                </ToolButton>
                <ToolButton $w={60} $disabled>
                  <FaPencilAlt size={12} color="#a6a6a6" />
                  Edit
                </ToolButton>
                <ToolButton $w={75} $disabled>
                  <FaRegTrashAlt size={12} color="#a6a6a6" />
                  Delete
                </ToolButton>
                <ToolSep />
                <ToolButton $w={117}>
                  <FaSearch size={12} color="#00781f" />
                  Policy Lookup
                </ToolButton>
                <SearchBox>
                  Search
                  <SearchGo><FaSearch size={12} /></SearchGo>
                </SearchBox>
              </Toolbar>
              <ViewTabs>
                <ViewTab $active>Interface Pair View</ViewTab>
                <ViewTab>By Sequence</ViewTab>
              </ViewTabs>
              <TableWrap>
                <PolicyTable>
                  <colgroup>
                    {columns.map((c) => (
                      <col key={c.label} width={c.width} />
                    ))}
                  </colgroup>
                  <thead>
                    <tr>
                      {columns.map((c) => (
                        <HeadCell key={c.label} $pad={c.pad}>{c.label}</HeadCell>
                      ))}
                    </tr>
                  </thead>
                  <tbody>
                    {groups.map((g) => (
                      <React.Fragment key={g.key}>
                        <tr>
                          <GroupCell colSpan={9}>
                            <GroupInner>
                              <Collapse />
                              {g.title}
                              <CountBadge>1</CountBadge>
                            </GroupInner>
                          </GroupCell>
                        </tr>
                        <PolicyRow policy={g.policy} />
                      </React.Fragment>
                    ))}
                  </tbody>
                </PolicyTable>
              </TableWrap>
              <HScroll>
                <HArrow />
                <HThumb />
                <HArrow $right />
              </HScroll>
            </Content>
          </Main>
        </BrowserWindow>
        <Tooltip>Microsoft Edge</Tooltip>
      </Desktop>

      <Taskbar>
        <SystemSlots>
          <TaskSlot><WinLogo color="#fff" size={16} /></TaskSlot>
          <TaskSlot>
            <GlyphStroke size={17} d="M6.500 9.500L1 15M15 6a5 5 0 1 1-10 0 5 5 0 0 1 10 0z" color="#fff" w={1.2} />
          </TaskSlot>
          <TaskSlot>
            <svg width="15" height="15"><circle cx="7.500" cy="7.500" r="6" fill="none" stroke="#fff" strokeWidth="2" /></svg>
          </TaskSlot>
          <TaskSlot>
            <svg width="16" height="15" viewBox="0 0 16 15" fill="none" stroke="#fff">
              <path d="M1 0h9M1 14.500h9M1.500 3.500h8v8h-8z" />
              <rect x="12" y="3" width="3" height="3" fill="#fff" stroke="none" />
              <rect x="12" y="9" width="3" height="3" fill="#fff" stroke="none" />
            </svg>
          </TaskSlot>
        </SystemSlots>
        <TaskSlot $app $state="hover"><EdgeIcon /></TaskSlot>
        <TaskSlot $app $state="open"><ChromeIcon /></TaskSlot>
        <TaskSlot $app><FolderIcon /></TaskSlot>
        <TaskSlot $app><TcpIcon /></TaskSlot>
        <TaskSlot $app><LockNetIcon /></TaskSlot>
        <TaskSlot $app><NetLinkIcon /></TaskSlot>
        <Pointer width="8" height="5" viewBox="0 0 8 5"><path d="M0 0v5h5z" fill="#fff" /></Pointer>
        <Tray>
          <TrayIcon $w={24}>
            <GlyphStroke size={13} d="M1 11l7-7 7 7" color="#fff" w={1.2} />
          </TrayIcon>
          <TrayIcon $w={24}>
            <svg width="13" height="17" viewBox="0 0 15 17" fill="none" stroke="#fff">
              <path d="M2 3c3-2 7-2 10 0M2 14c3 2 7 2 10 0" />
              <rect x="1" y="5" width="9" height="7" rx="1" />
              <path d="M10 7l4-2v7l-4-2" />
            </svg>
          </TrayIcon>
          <TrayIcon $w={23}>
            <svg width="17" height="17" viewBox="0 0 17 17" fill="none" stroke="#fff">
              <circle cx="8" cy="8" r="7" />
              <ellipse cx="8" cy="8" rx="3" ry="7" />
              <path d="M1 8h14M2 4.500h12M2 11.500h12" />
              <circle cx="13" cy="13" r="3" fill="#031420" />
              <path d="M11 11l4 4" />
            </svg>
          </TrayIcon>
          <TrayIcon $w={22}>
            <svg width="18" height="16" viewBox="0 0 18 16">
              <path d="M1 5h3l4-4v12L4 9H1z" fill="none" stroke="#fff" />
              <circle cx="13" cy="11" r="4.500" fill="#e81123" />
              <path d="M11 9l4 4M15 9l-4 4" stroke="#fff" />
            </svg>
          </TrayIcon>
          <Clock>
            1:35 AM
            <br />
            3/25/2025
          </Clock>
          <Notify>
            <svg width="17" height="16" viewBox="0 0 17 16" fill="#fff">
              <path d="M0 0h17v12H7l-3 4v-4H0z" />
              <path d="M3 3h11M3 6h11M3 9h7" stroke="#031420" />
            </svg>
            <NotifyCount>5</NotifyCount>
          </Notify>
        </Tray>
      </Taskbar>
    </Screen>
  )
}
